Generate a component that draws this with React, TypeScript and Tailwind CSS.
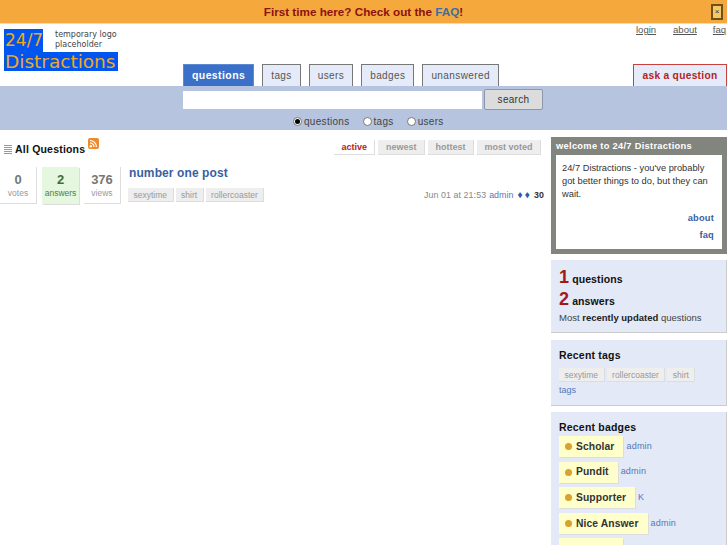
import React from "react";

const font = "font-['Liberation_Sans',Arial,sans-serif]";

function Tab({ label, active }: { label: string; active?: boolean }) {
  if (active) {
    return (
      <div className="h-[22px] px-[8px] bg-[#3a70c8] text-white font-bold text-[10.5px] tracking-[0.4px] flex items-center border-t border-x border-[#5d8ad4]">
        {label}
      </div>
    );
  }
  return (
    <div className="h-[22px] px-[8px] bg-[#e5ebf8] text-[#555] text-[10px] tracking-[0.4px] flex items-center border-t border-x border-[#777]">
      {label}
    </div>
  );
}

function Stat({ n, label, green }: { n: string; label: string; green?: boolean }) {
  return (
    <div className={`w-[37px] h-[37px] flex flex-col items-center pt-[5px] ${green ? "bg-[#e5f7df] text-[#3f6b3f] shadow-[1px_1px_0_#ddd]" : "bg-white text-[#777] border-r border-b border-[#ddd]"}`}>
      <div className="font-bold text-[13px] leading-[16px]">{n}</div>
      <div className={`text-[8.5px] leading-[14px] -mt-[2px] ${green ? "text-[#4f7f4f]" : "text-[#999]"}`}>{label}</div>
    </div>
  );
}

function Tag({ label }: { label: string }) {
  return (
    <span className="h-[14px] px-[5.5px] bg-[#eee] text-[#999] text-[8.5px] leading-[14px] border-r border-b border-[#ddd]">
      {label}
    </span>
  );
}

function Sort({ label, active }: { label: string; active?: boolean }) {
  return (
    <div className={`h-[15px] px-[7.5px] text-[9px] font-bold leading-[15px] border-r border-b ${active ? "bg-white text-[#b32424] border-[#ddd]" : "bg-[#eee] text-[#999] border-[#ddd]"}`}>
      {label}
    </div>
  );
}

function Radio({ label, checked }: { label: string; checked?: boolean }) {
  return (
    <div className="flex items-center gap-[2px]">
      <div className="w-[9px] h-[9px] rounded-full border border-[#777] bg-white flex items-center justify-center">
        {checked && <div className="w-[5px] h-[5px] rounded-full bg-black" />}
      </div>
      <span className="text-[#444] text-[10px] tracking-[0.3px]">{label}</span>
    </div>
  );
}

function Badge({ name, user }: { name: string; user: string }) {
  return (
    <div className="flex items-center gap-[3px] mb-[4.6px]">
      <div className="h-[21px] pl-[6px] pr-[9px] bg-[#ffffcc] shadow-[1px_1px_0_#ddd] flex items-center gap-[4px] text-[#333] font-bold text-[10.3px] tracking-[0.1px]">
        <span className="w-[7px] h-[7px] rounded-full bg-[#d9a22e]" />
        {name}
      </div>
      <span className="text-[#5478b8] text-[9px] tracking-[0.2px]">{user}</span>
    </div>
  );
}

export default function App() {
  return (
    <div className={`${font} w-[727px] h-[545px] overflow-hidden bg-white`}>
      <div className="h-[24px] bg-[#f5a83c] border-b border-[#fbd9a5] flex items-center justify-center relative">
        <span className="font-bold text-[11.7px] text-[#8f1111]">
          First time here? Check out the <span className="text-[#3a6ea5]">FAQ</span>!
        </span>
        <div className="absolute left-[711px] top-[4px] w-[12px] h-[16px] border-2 border-[#6e5218] bg-[#f8c765] text-[8px] leading-[11px] text-center text-[#333]">×</div>
      </div>

      <div className="h-[62px] relative">
        <div className="absolute left-[636px] top-[-1px] w-[91px] h-[12px] flex text-[9.5px] text-[#555] underline">
          <span>login</span>
          <span className="ml-[17px]">about</span>
          <span className="ml-[16px]">faq</span>
        </div>
        <div className="absolute left-[4px] top-[5px] font-['DejaVu_Sans',sans-serif] text-[#f0a81e]">
          <div className="bg-[#0055ee] w-[39px] h-[23px] pl-[1px] text-[17px] leading-[23px]">24/7</div>
          <div className="bg-[#0055ee] w-[114px] h-[19px] pl-[1px] text-[18.5px] leading-[19px] whitespace-nowrap">Distractions</div>
        </div>
        <div className="absolute left-[55px] top-[6px] font-['DejaVu_Sans',sans-serif] text-[8px] leading-[10px] text-[#444]">
          temporary logo<br />placeholder
        </div>
        <div className="absolute left-[183px] top-[40px] flex gap-[8px]">
          <Tab label="questions" active />
          <Tab label="tags" />
          <Tab label="users" />
          <Tab label="badges" />
          <Tab label="unanswered" />
        </div>
        <div className="absolute left-[633px] top-[40px] w-[94px] h-[22px] bg-[#e5ebf8] border-t border-x border-[#c94040] text-[#b32424] font-bold text-[10.2px] tracking-[0.3px] flex items-center justify-center">
          ask a question
        </div>
      </div>

      <div className="h-[44px] bg-[#b6c4e0] pl-[183px] pt-[3px]">
        <div className="flex items-center gap-[2px]">
          <div className="w-[299px] h-[18px] bg-white" />
          <div className="w-[59px] h-[21px] rounded-[2px] border border-[#8b97ac] bg-[#dcdcdc] text-[#333] text-[10px] tracking-[0.3px] flex items-center justify-center">search</div>
        </div>
        <div className="flex gap-[13px] ml-[110px] mt-[4px]">
          <Radio label="questions" checked />
          <Radio label="tags" />
          <Radio label="users" />
        </div>
      </div>

      <div className="flex">
        <div className="w-[551px] shrink-0 pr-[7px]">
          <div className="h-[37px] flex items-start justify-between pt-[11px]">
            <div className="flex items-center pl-[4px]">
              <div className="flex flex-col gap-[1px] mr-[3px] mt-[1px]">
                <div className="w-[8px] h-[1px] bg-[#999]" />
                <div className="w-[8px] h-[1px] bg-[#999]" />
                <div className="w-[8px] h-[1px] bg-[#999]" />
                <div className="w-[8px] h-[1px] bg-[#999]" />
                <div className="w-[8px] h-[1px] bg-[#999]" />
              </div>
              <span className="font-bold text-[10.5px] leading-[16px] text-[#111] tracking-[0.2px]">All Questions</span>
              <svg width="11" height="11" viewBox="0 0 11 11" className="ml-[3px] -mt-[12px]">
                <rect width="11" height="11" rx="2" fill="#ef8a2d" />
                <circle cx="2.8" cy="8.2" r="1.2" fill="#fff" />
                <path d="M2 5a4 4 0 0 1 4 4M2 2.500A6.500 6.500 0 0 1 8.500 9" stroke="#fff" strokeWidth="1.2" fill="none" />
              </svg>
            </div>
            <div className="flex gap-[3px] mr-[3px] mt-[-1px]">
              <Sort label="active" active />
              <Sort label="newest" />
              <Sort label="hottest" />
              <Sort label="most voted" />
            </div>
          </div>
          <div className="flex">
            <div className="flex gap-[5px]">
              <Stat n="0" label="votes" />
              <Stat n="2" label="answers" green />
              <Stat n="376" label="views" />
            </div>
            <div className="ml-[7px] flex-1">
              <div className="font-bold text-[12px] leading-[13px] text-[#3a5f9f] tracking-[0.1px] ml-[1px]">number one post</div>
              <div className="flex items-start justify-between mt-[8px]">
                <div className="flex gap-[2px]">
                  <Tag label="sexytime" />
                  <Tag label="shirt" />
                  <Tag label="rollercoaster" />
                </div>
                <div className="text-[8.8px] text-[#888] leading-[14px] tracking-[0.1px] flex items-center">
                  <span>Jun 01 at 21:53</span>
                  <span className="text-[#5478b8] ml-[3px]">admin</span>
                  <span className="text-[#2f5aa8] ml-[4px] text-[10px]">♦</span>
                  <span className="text-[#2f5aa8] ml-[2px] text-[10px]">♦</span>
                  <span className="text-[#333] ml-[4px] font-bold">30</span>
                </div>
              </div>
            </div>
          </div>
        </div>

        <div className="w-[176px] shrink-0 pt-[7px] flex flex-col gap-[6px]">
          <div className="bg-[#82847e] h-[117px] px-[5px] pt-[3px]">
            <div className="text-white font-bold text-[9.3px] leading-[13px] tracking-[0.3px]">welcome to 24/7 Distractions</div>
            <div className="bg-white h-[94px] mt-[2px] pt-[7px] pl-[6px] pr-[8px] text-[9.3px] leading-[13px] text-[#333]">
              24/7 Distractions - you've probably got better things to do, but they can wait.
              <div className="text-right text-[#3a5f9f] font-bold mt-[11px] tracking-[0.2px]">about</div>
              <div className="text-right text-[#3a5f9f] font-bold mt-[4px] tracking-[0.2px]">faq</div>
            </div>
          </div>

          <div className="bg-[#e3e9f6] h-[73px] px-[8px] pt-[6px] border-r border-b border-[#ccc]">
            <div className="flex items-baseline h-[22px] text-[#111] font-bold text-[10.5px] tracking-[0.1px]">
              <span className="text-[#a31818] text-[18px] leading-[22px] mr-[3px]">1</span>questions
            </div>
            <div className="flex items-baseline h-[22px] text-[#111] font-bold text-[10.5px] tracking-[0.1px]">
              <span className="text-[#a31818] text-[18px] leading-[22px] mr-[3px]">2</span>answers
            </div>
            <div className="text-[9.5px] text-[#444] leading-[14px] mt-[1px]">
              Most <b className="text-[#222]">recently updated</b> questions
            </div>
          </div>

          <div className="bg-[#e3e9f6] h-[66px] mt-[1px] px-[8px] pt-[8px] border-r border-b border-[#ccc]">
            <div className="font-bold text-[10.5px] leading-[14px] text-[#111] tracking-[0.2px]">Recent tags</div>
            <div className="flex gap-[2px] mt-[6px]">
              <Tag label="sexytime" />
              <Tag label="rollercoaster" />
              <Tag label="shirt" />
            </div>
            <div className="text-[9px] leading-[14px] text-[#5478b8] mt-[1px]">tags</div>
          </div>

          <div className="bg-[#e3e9f6] h-[140px] px-[8px] pt-[8px] border-r border-[#ccc]">
            <div className="font-bold text-[10.5px] leading-[14px] text-[#111] tracking-[0.2px] mb-[2px]">Recent badges</div>
            <Badge name="Scholar" user="admin" />
            <Badge name="Pundit" user="admin" />
            <Badge name="Supporter" user="K" />
            <Badge name="Nice Answer" user="admin" />
            <div className="w-[64px] h-[21px] bg-[#ffffcc] shadow-[1px_1px_0_#ddd]" />
          </div>
        </div>
      </div>
    </div>
  );
}
